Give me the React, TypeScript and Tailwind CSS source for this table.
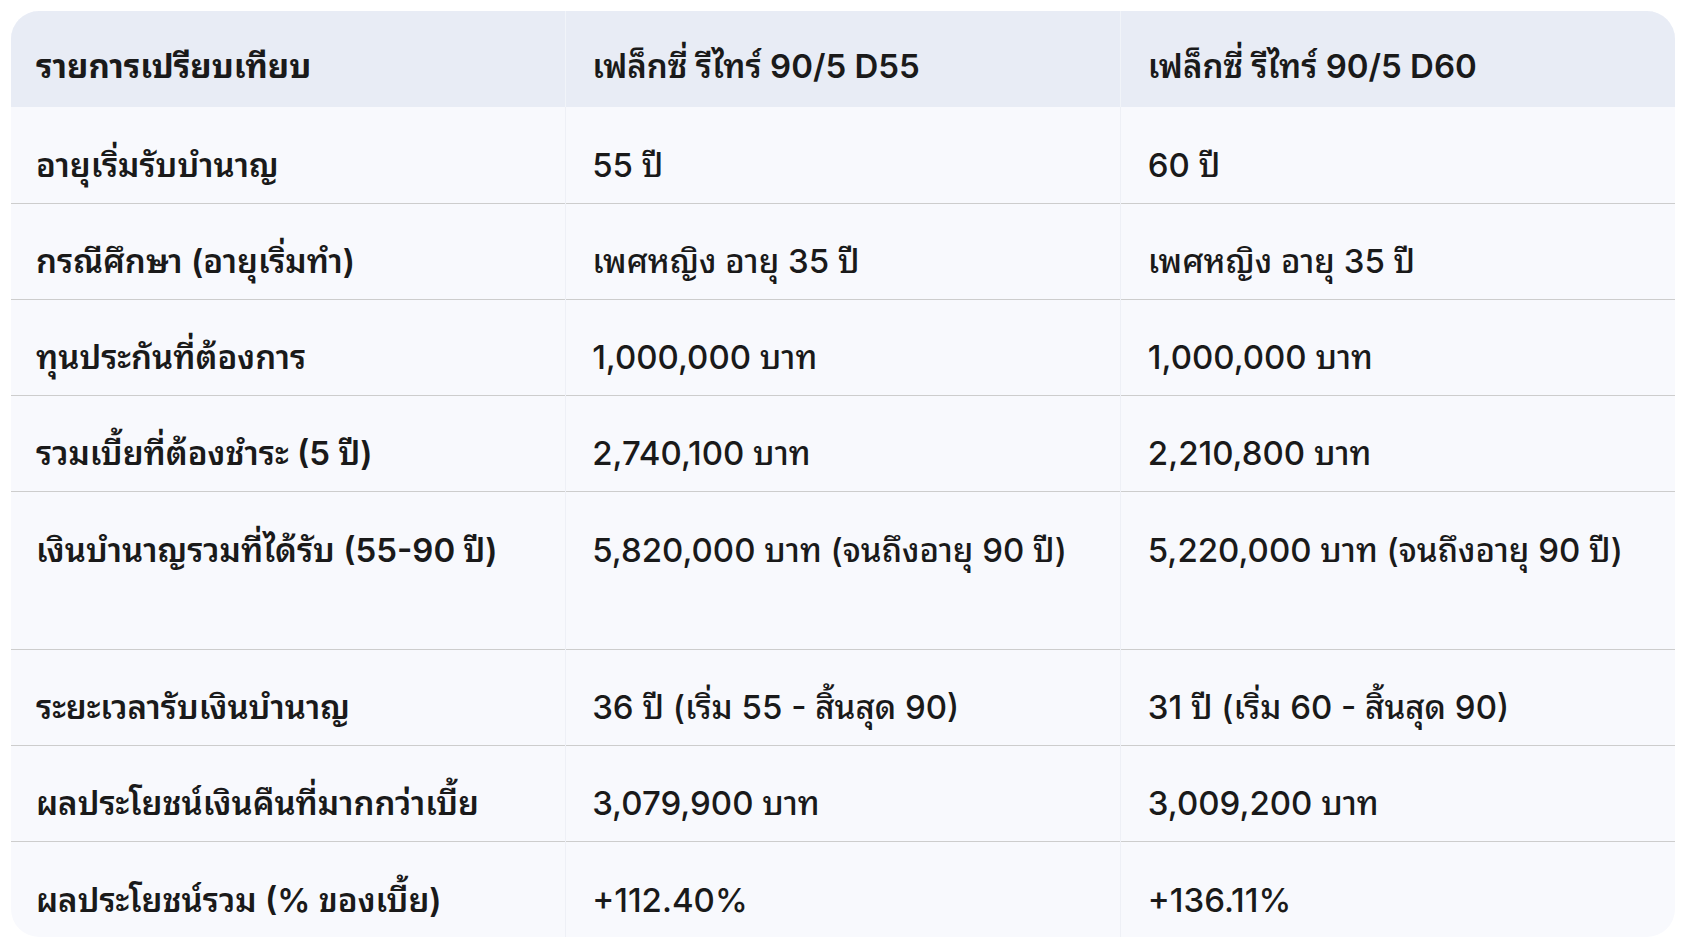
import React from "react";

type Row = {
  label: string;
  d55: string;
  d60: string;
  tall?: boolean;
};

const rows: Row[] = [
  { label: "อายุเริ่มรับบำนาญ", d55: "55 ปี", d60: "60 ปี" },
  {
    label: "กรณีศึกษา (อายุเริ่มทำ)",
    d55: "เพศหญิง อายุ 35 ปี",
    d60: "เพศหญิง อายุ 35 ปี",
  },
  {
    label: "ทุนประกันที่ต้องการ",
    d55: "1,000,000 บาท",
    d60: "1,000,000 บาท",
  },
  {
    label: "รวมเบี้ยที่ต้องชำระ (5 ปี)",
    d55: "2,740,100 บาท",
    d60: "2,210,800 บาท",
  },
  {
    label: "เงินบำนาญรวมที่ได้รับ (55-90 ปี)",
    d55: "5,820,000 บาท (จนถึงอายุ 90 ปี)",
    d60: "5,220,000 บาท (จนถึงอายุ 90 ปี)",
    tall: true,
  },
  {
    label: "ระยะเวลารับเงินบำนาญ",
    d55: "36 ปี (เริ่ม 55 - สิ้นสุด 90)",
    d60: "31 ปี (เริ่ม 60 - สิ้นสุด 90)",
  },
  {
    label: "ผลประโยชน์เงินคืนที่มากกว่าเบี้ย",
    d55: "3,079,900 บาท",
    d60: "3,009,200 บาท",
  },
  {
    label: "ผลประโยชน์รวม (% ของเบี้ย)",
    d55: "+112.40%",
    d60: "+136.11%",
  },
];

export default function App() {
  return (
    <div
      className="min-h-screen bg-white pl-[11px] pr-[16px] pt-[11px] text-[#1a1a1a]"
      style={{
        fontFamily:
          'Inter, "Noto Sans Thai Looped", "Sukhumvit Set", Sarabun, Loma, Garuda, "Noto Sans Thai", "Noto Sans", sans-serif',
      }}
    >
      <div className="overflow-hidden rounded-[28px] bg-[#f8f9fd]">
        <table className="w-full table-fixed border-collapse text-[33px] leading-[1.5]">
          <thead>
            <tr className="h-[96px] bg-[#e8ecf5]">
              <th className="px-[25px] pt-[16px] text-left font-bold">
                รายการเปรียบเทียบ
              </th>
              <th className="border-l border-[#f1f4f9] px-[26px] pt-[16px] text-left font-semibold">
                เฟล็กซี่ รีไทร์ 90/5 D55
              </th>
              <th className="border-l border-[#f1f4f9] px-[27px] pt-[16px] text-left font-semibold">
                เฟล็กซี่ รีไทร์ 90/5 D60
              </th>
            </tr>
          </thead>
          <tbody>
            {rows.map((r, i) => (
              <tr
                key={r.label}
                className={`${r.tall ? "h-[158px]" : "h-[96px]"} ${
                  i > 0 ? "border-t border-[#cdcdcd]" : ""
                }`}
              >
                <td
                  className={`px-[25px] font-semibold ${
                    r.tall ? "pt-[34px] align-top" : "pt-[22px]"
                  }`}
                >
                  {r.label}
                </td>
                <td
                  className={`border-l border-[#eef0f6] px-[26px] font-medium ${
                    r.tall ? "pt-[34px] align-top" : "pt-[22px]"
                  }`}
                >
                  {r.d55}
                </td>
                <td
                  className={`border-l border-[#eef0f6] px-[27px] font-medium ${
                    r.tall ? "pt-[34px] align-top" : "pt-[22px]"
                  }`}
                >
                  {r.d60}
                </td>
              </tr>
            ))}
          </tbody>
        </table>
      </div>
    </div>
  );
}
